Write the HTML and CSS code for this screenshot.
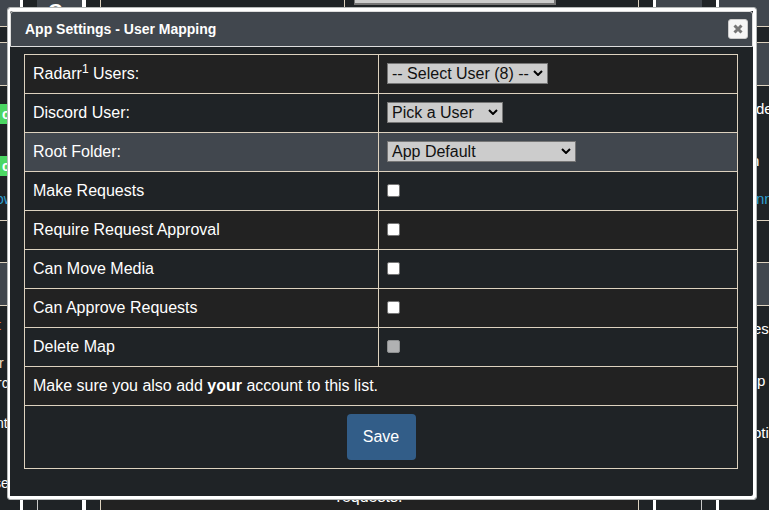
FILE: index.html
```html
<!DOCTYPE html>
<html lang="en">
<head>
<meta charset="utf-8">
<title>App Settings - User Mapping</title>
<link rel="stylesheet" href="styles.css">
</head>
<body>
<div class="page">
  <div class="side left">
    <div class="block head"></div>
    <div class="block gap"></div>
    <div class="block bar"></div>
    <div class="block status">
      <span class="badge">c</span>
      <span class="badge">c</span>
      <span class="link">ow</span>
    </div>
    <div class="block space"></div>
    <div class="block bar"></div>
    <div class="notes"><p class="warn">t</p><p class="sand">r</p><p class="rc">rc</p><p class="nt">nt</p><p class="se">se</p></div>
  </div>
  <div class="rail"><div class="tile logo">C<small>o</small></div></div>
  <div class="middle">
    <div class="mid-top"><div class="field"></div></div>
    <div class="mid-bottom">requests.</div>
  </div>
  <div class="rail second"><div class="tile"></div></div>
  <div class="side right">
    <div class="block head"></div>
    <div class="block gap"></div>
    <div class="block bar"></div>
    <div class="block status"><p class="de">de</p><p class="n">n</p><p class="link">nn</p></div>
    <div class="block space"></div>
    <div class="block bar"></div>
    <div class="notes"><p class="es">es</p><p class="pp">p</p><p class="oti">oti</p></div>
  </div>
</div>

<div class="dialog" role="dialog">
  <header class="titlebar">
    <span>App Settings - User Mapping</span>
    <button class="close" aria-label="Close"><svg viewBox="0 0 10 10" width="10" height="10"><path d="M1.5 1.5 8.5 8.5M8.5 1.5 1.5 8.5"/></svg></button>
  </header>
  <div class="form">
    <div class="row odd"><div class="label">Radarr<sup>1</sup> Users:</div><div class="value"><div class="select users"><span>-- Select User (8) --</span><svg viewBox="0 0 10 6"><path d="M1 1 5 5 9 1"/></svg></div></div></div>
    <div class="row"><div class="label">Discord User:</div><div class="value"><div class="select pick"><span>Pick a User</span><svg viewBox="0 0 10 6"><path d="M1 1 5 5 9 1"/></svg></div></div></div>
    <div class="row hover"><div class="label">Root Folder:</div><div class="value"><div class="select root"><span>App Default</span><svg viewBox="0 0 10 6"><path d="M1 1 5 5 9 1"/></svg></div></div></div>
    <div class="row"><div class="label">Make Requests</div><div class="value"><i class="check"></i></div></div>
    <div class="row odd"><div class="label">Require Request Approval</div><div class="value"><i class="check"></i></div></div>
    <div class="row"><div class="label">Can Move Media</div><div class="value"><i class="check"></i></div></div>
    <div class="row odd"><div class="label">Can Approve Requests</div><div class="value"><i class="check"></i></div></div>
    <div class="row"><div class="label">Delete Map</div><div class="value"><i class="check off"></i></div></div>
    <div class="row odd full"><div>Make sure you also add <b>your</b> account to this list.</div></div>
    <div class="row save"><button class="primary">Save</button></div>
  </div>
</div>
</body>
</html>
```
FILE: styles.css
```css
* { box-sizing: border-box; }
body {
  margin: 0;
  width: 769px;
  height: 510px;
  overflow: hidden;
  background: #1f2326;
  color: #fff;
  font-family: "Liberation Sans", Arial, sans-serif;
  font-size: 16px;
}
p { margin: 0; }

.page {
  display: grid;
  grid-template-columns: 20px 66px 567px 66px 50px;
  height: 510px;
  font-size: 14px;
  line-height: 20px;
}
.side { overflow: hidden; white-space: nowrap; }
.block { border-bottom: 1px solid #ddd2bf; }
.head { height: 27px; background: #41474e; }
.gap { height: 16px; }
.bar { height: 43px; background: #41474e; }
.status { height: 135px; padding-top: 18px; }
.space { height: 42px; }
.badge {
  display: block;
  height: 20px;
  margin-bottom: 32px;
  padding-left: 2px;
  background: #4bd763;
  font-weight: bold;
}
.link { display: block; color: #2d9fd0; }
.left .link { margin: -19px 0 0 -4px; }
.notes p { height: 20px; }
.notes .warn { margin: 9px 0 0 -3px; color: #e0722a; }
.notes .sand { margin: 18px 0 0 -1px; color: #f5dfc0; }
.notes .rc { margin-left: -3px; }
.notes .nt { margin: 20px 0 0 -4px; }
.notes .se { margin: 40px 0 0 -6px; }
.right { font-size: 15px; }
.right .status { padding: 13px 0 0 37px; }
.right .n { margin: 32px 0 18px -5px; }
.right .notes { padding: 13px 0 0 34px; }
.notes .pp { margin: 32px 0 0 4px; }
.notes .oti { margin: 32px 0 0 0; }

.rail {
  display: flex;
  padding-left: 14px;
  border-left: 3px solid #fff;
  border-right: 4px solid #fff;
}
.rail .tile {
  width: 45px;
  height: 510px;
  border-left: 1px solid;
  border-image: linear-gradient(#41474e 50%, #c8c8c8 50%) 1;
  background: linear-gradient(#41474e 0 50px, #1f2326 50px);
}
.rail .logo { padding: 0 0 0 10px; font-size: 20px; font-weight: bold; line-height: 22px; }
.logo small { font-size: 20px; }
.rail.second { padding-left: 0; border-right-width: 3px; }
.rail.second .tile { width: 50px; border-width: 0 1px 0 0; border-style: solid; }
.rail.second .tile { width: 46px; }

.middle {
  display: flex;
  flex-direction: column;
  justify-content: space-between;
  margin: 0 14px;
  border: solid #ddd2bf;
  border-width: 0 1px;
}
.mid-top {
  width: 295px;
  height: 12px;
  margin-left: 243px;
  padding-left: 9px;
  border-left: 1px solid #ddd2bf;
}
.field { width: 202px; height: 5px; background: #ccc; border: solid #767676; border-width: 0 2px 2px 1px; }
.mid-bottom { height: 24px; background: #222; text-align: center; font-size: 16px; line-height: 21px; }

.dialog {
  position: absolute;
  left: 7px;
  top: 7px;
  width: 750px;
  height: 493px;
  padding: 3px 3px 0 2px;
  border: 1px solid #b5b8b8;
  border-radius: 3px;
  background: #1f2326;
  box-shadow: inset 2px 3px #fff, inset -3px -3px #fff;
}
.titlebar {
  display: flex;
  align-items: center;
  justify-content: space-between;
  height: 36px;
  padding: 0 5px 0 14px;
  border: 1px solid #ddd;
  border-radius: 3px;
  border-bottom-left-radius: 0;
  border-bottom-right-radius: 0;
  background: #41474e;
  font-size: 14px;
  font-weight: bold;
}
.close {
  display: flex;
  align-items: center;
  justify-content: center;
  width: 20px;
  height: 20px;
  margin-right: -1px;
  padding: 0;
  border: 1px solid #ccc;
  border-radius: 3px;
  background: #f6f6f6;
}
.close svg { flex: none; }
.close path { fill: none; stroke: #777; stroke-width: 3; }

.form {
  width: 714px;
  margin: 7px 0 0 14px;
  border: 1px solid #ddd2bf;
}
.row {
  display: grid;
  grid-template-columns: 354px 1fr;
  height: 39px;
  border-bottom: 1px solid #ddd2bf;
  line-height: 38px;
}
.odd { background: #222; }
.hover { background: #41474e; }
.label { padding-left: 8px; border-right: 1px solid #ddd2bf; }
.label sup { font-size: 12px; line-height: 0; vertical-align: 6px; }
.value { display: flex; align-items: center; padding: 0 0 2px 8px; }
.full { display: block; padding-left: 8px; }
.save {
  display: flex;
  justify-content: center;
  align-items: center;
  height: 62px;
  border-bottom: 0;
}
.primary {
  width: 69px;
  height: 46px;
  border: 0;
  border-radius: 4px;
  background: #325d88;
  color: #fff;
  font: 16px "Liberation Sans", Arial, sans-serif;
}
.select {
  display: flex;
  align-items: center;
  justify-content: space-between;
  height: 21px;
  padding: 0 4px;
  border: 1px solid #767676;
  background: #ccc;
  color: #111;
  line-height: 19px;
  white-space: nowrap;
}
.select svg { flex: none; width: 10px; height: 6px; }
.select path { fill: none; stroke: #000; stroke-width: 2; }
.users { width: 161px; }
.pick { width: 116px; }
.root { width: 189px; }
.check {
  width: 13px;
  height: 13px;
  border: 1px solid #767676;
  border-radius: 2px;
  background: #fff;
}
.off { background: #b0b1b2; border-color: #8e9091; }
```
